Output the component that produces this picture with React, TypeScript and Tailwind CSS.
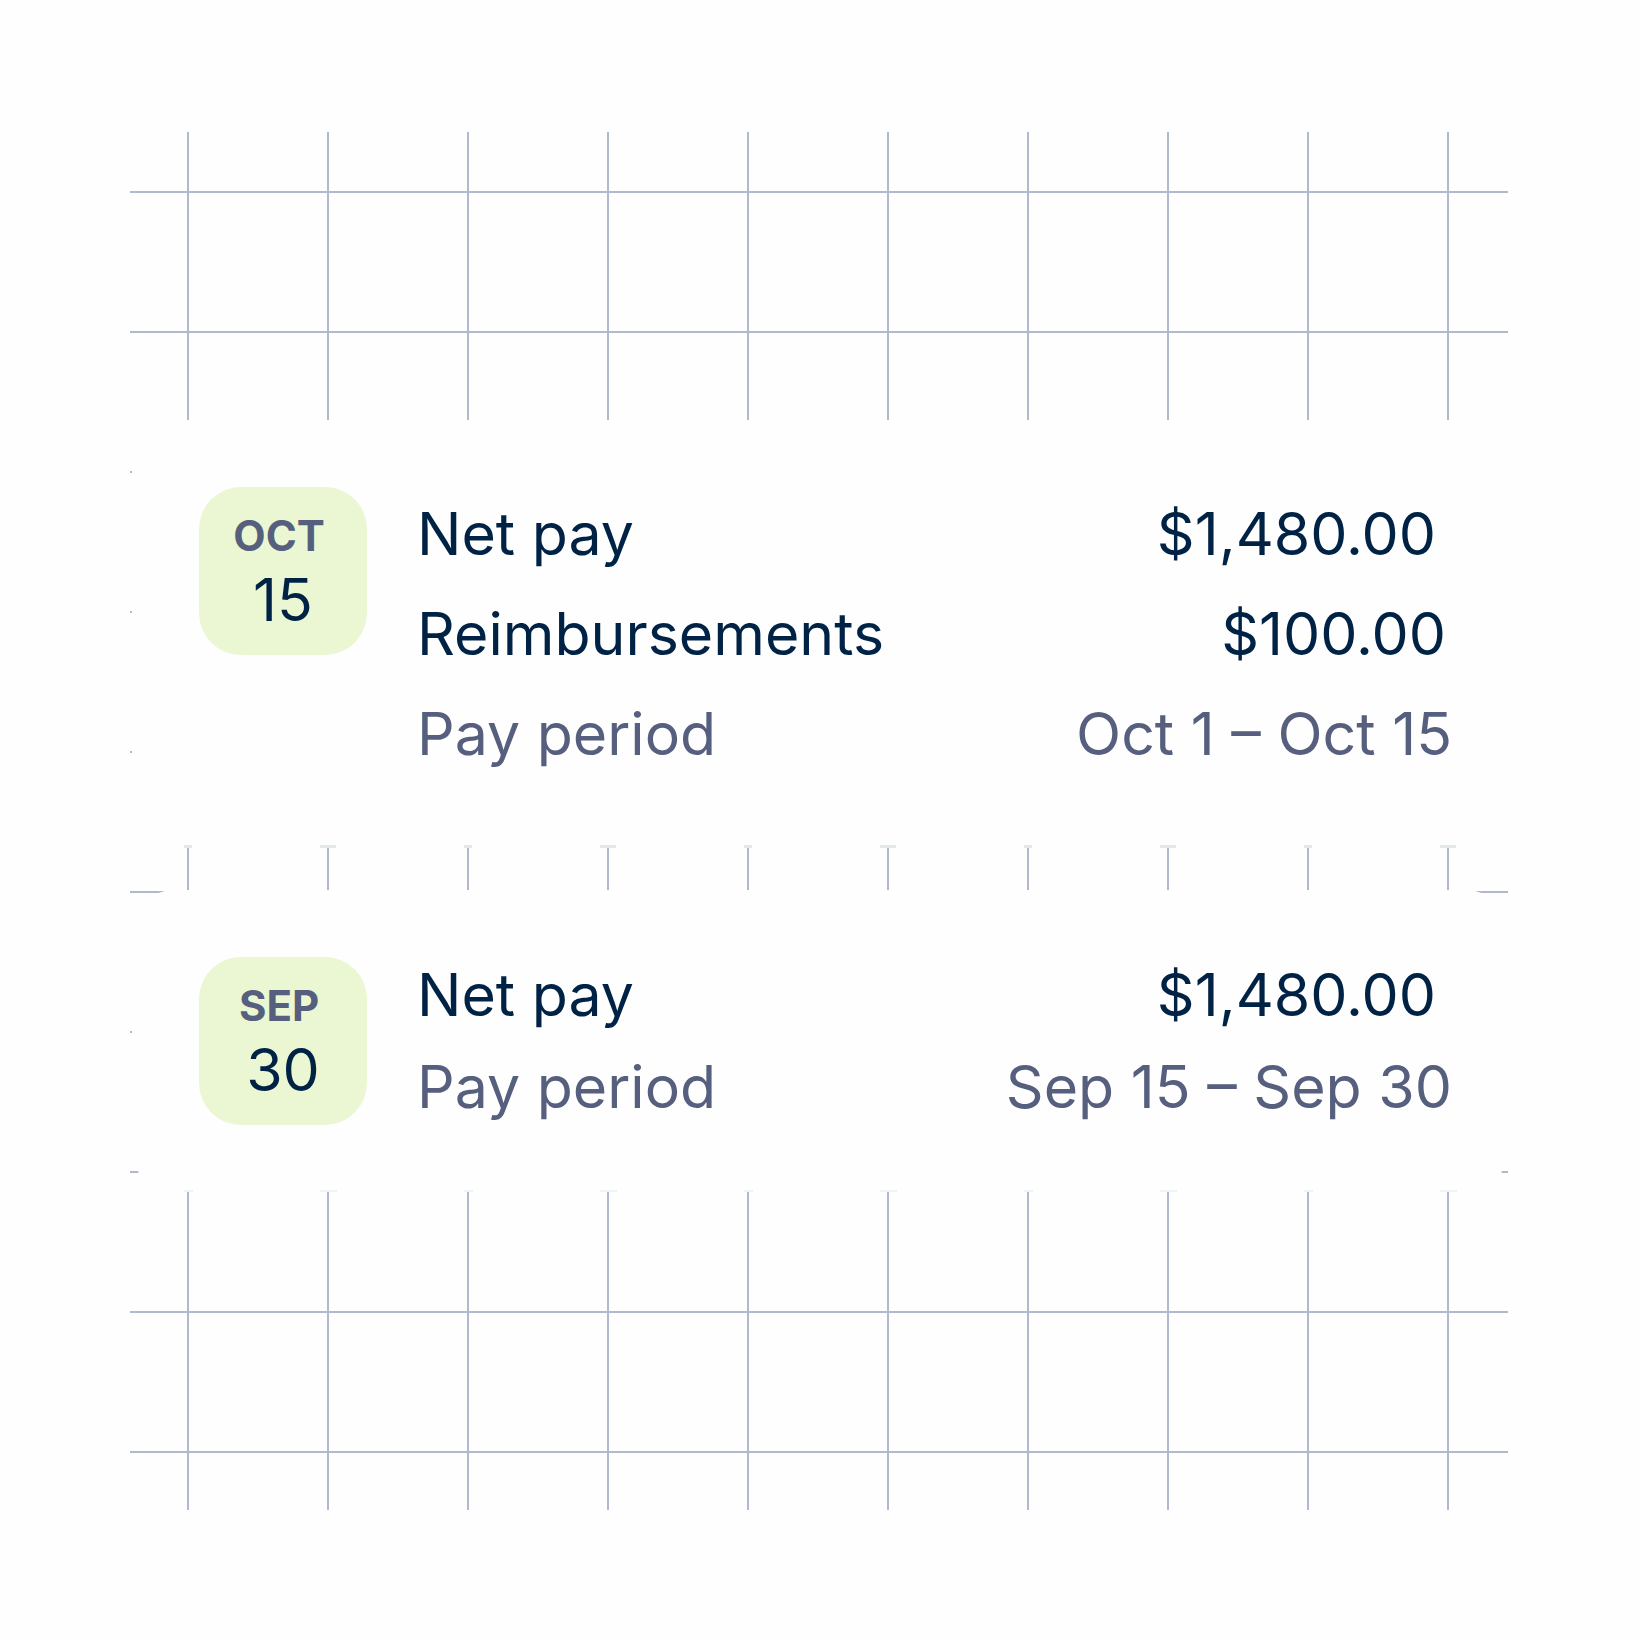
import React from 'react';
import clsx from 'clsx';

type PayRow = {
  label: string;
  value: string;
  muted?: boolean;
  inset?: string;
};

type Paycheck = {
  month: string;
  day: string;
  rows: PayRow[];
};

const paychecks: Paycheck[] = [
  {
    month: 'OCT',
    day: '15',
    rows: [
      { label: 'Net pay', value: '$1,480.00', inset: 'pr-4' },
      { label: 'Reimbursements', value: '$100.00', inset: 'pr-1.5' },
      { label: 'Pay period', value: 'Oct 1 – Oct 15', muted: true },
    ],
  },
  {
    month: 'SEP',
    day: '30',
    rows: [
      { label: 'Net pay', value: '$1,480.00', inset: 'pr-4' },
      { label: 'Pay period', value: 'Sep 15 – Sep 30', muted: true },
    ],
  },
];

const GridLines: React.FC = () => (
  <svg className="absolute inset-0 h-full w-full" aria-hidden="true">
    <defs>
      <pattern id="grid" width="140" height="140" patternUnits="userSpaceOnUse">
        <path d="M57 0h2v140h-2z M0 59h140v2H0z" fill="#b1bacc" />
      </pattern>
    </defs>
    <rect width="100%" height="100%" fill="url(#grid)" />
  </svg>
);

// Short ticks where the grid lines leave the bottom edge of a card
const EdgeTicks: React.FC<{ id: string; faint: boolean }> = ({ id, faint }) => (
  <svg className="absolute bottom-0 left-0 h-[3px] w-full" aria-hidden="true">
    <defs>
      <pattern id={id} width="280" height="3" patternUnits="userSpaceOnUse">
        <path d={faint ? 'M52 1h9v2h-9z M188 1h17v2h-17z' : 'M52 0h8v3h-8z M188 0h16v3h-16z'} fill={faint ? '#f0f3f4' : '#e3e8eb'} />
      </pattern>
    </defs>
    <rect width="100%" height="3" fill={`url(#${id})`} />
  </svg>
);

const DateBadge: React.FC<{ month: string; day: string }> = ({ month, day }) => (
  <div className="flex h-[168px] w-[168px] shrink-0 flex-col items-center rounded-[42px] bg-[#ebf7d2] pt-[23px]">
    <span className="pr-2 text-[42px] leading-[52px] font-bold text-[#565f7d]">{month}</span>
    <span className="text-[59px] leading-[76px] text-[#002245]">{day}</span>
  </div>
);

const PaycheckCard: React.FC<{ paycheck: Paycheck }> = ({ paycheck }) => {
  const { month, day, rows } = paycheck;
  const roomy = rows.length > 2;

  return (
    <article className="relative flex gap-[50px] rounded-[42px] bg-[#fefefe] py-[67px] pr-[56px] pl-[67px]">
      <DateBadge month={month} day={day} />
      <dl className={clsx('flex flex-1 flex-col', roomy ? 'gap-7 py-[11px]' : 'gap-5 py-[2px]')}>
        {rows.map((row) => (
          <div
            key={row.label}
            className={clsx(
              'flex justify-between text-[59px] leading-[72px] whitespace-nowrap',
              row.muted ? 'text-[#565f7d]' : 'text-[#002245]',
            )}
          >
            <dt>{row.label}</dt>
            <dd className={row.inset}>{row.value}</dd>
          </div>
        ))}
      </dl>
      <EdgeTicks id={`ticks-${month}`} faint={!roomy} />
    </article>
  );
};

const App: React.FC = () => {
  return (
    <main className="min-h-screen bg-[#fefefe] py-[132px] pr-[132px] pl-[130px] font-['Inter',sans-serif]">
      <section className="relative flex flex-col gap-[42px] pt-72 pb-[318px] pl-0.5">
        <GridLines />
        {paychecks.map((paycheck) => (
          <PaycheckCard key={paycheck.month} paycheck={paycheck} />
        ))}
      </section>
    </main>
  );
};

export default App;
